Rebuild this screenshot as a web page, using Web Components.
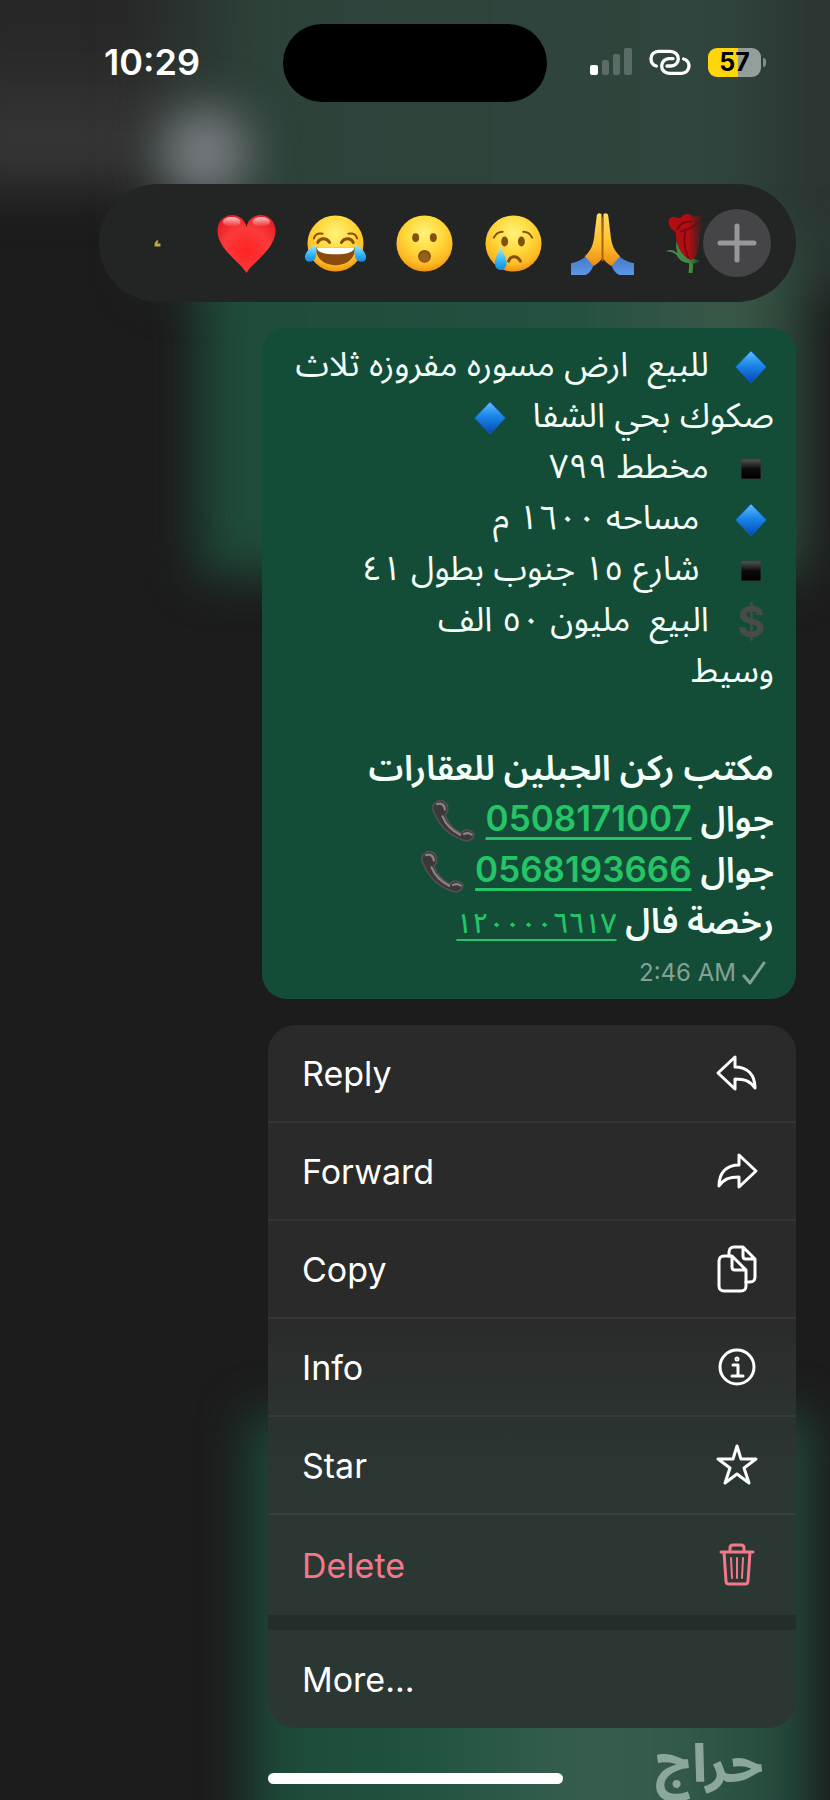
<!DOCTYPE html>
<html lang="en">
<head>
<meta charset="UTF-8">
<meta name="viewport" content="width=device-width, initial-scale=1.0">
<title>Message actions</title>
<style>
    body {
        margin: 0;
        background: #1c1c1c;
        color: #fff;
        font-family: Inter, "Noto Sans Arabic", "DejaVu Sans", sans-serif;
    }
</style>
</head>
<body>
<message-screen>
    <status-bar slot="status" time="10:29" battery="57"></status-bar>
    <reaction-bar></reaction-bar>
    <chat-bubble time="2:46 AM">
        <message-line><emoji-glyph name="diamond"></emoji-glyph>&nbsp; للبيع&nbsp; ارض مسوره مفروزه ثلاث</message-line>
        <message-line>صكوك بحي الشفا&nbsp; <emoji-glyph name="diamond"></emoji-glyph></message-line>
        <message-line><emoji-glyph name="square"></emoji-glyph>&nbsp; مخطط ٧٩٩</message-line>
        <message-line><emoji-glyph name="diamond"></emoji-glyph>&nbsp;&nbsp; مساحه ١٦٠٠ م</message-line>
        <message-line><emoji-glyph name="square"></emoji-glyph>&nbsp;&nbsp; شارع ١٥ جنوب بطول ٤١</message-line>
        <message-line><emoji-glyph name="dollar"></emoji-glyph>&nbsp; البيع&nbsp; مليون ٥٠ الف</message-line>
        <message-line>وسيط</message-line>
        <message-line blank></message-line>
        <message-line strong>مكتب ركن الجبلين للعقارات</message-line>
        <message-line strong>جوال <message-link href="tel:0508171007">0508171007</message-link> <emoji-glyph name="phone"></emoji-glyph></message-line>
        <message-line strong>جوال <message-link href="tel:0568193666">0568193666</message-link><emoji-glyph name="phone"></emoji-glyph></message-line>
        <message-line strong>رخصة فال <message-link href="tel:1200006617" thin>١٢٠٠٠٠٦٦١٧</message-link></message-line>
    </chat-bubble>
    <action-menu>
        <action-item icon="reply">Reply</action-item>
        <action-item icon="forward">Forward</action-item>
        <action-item icon="copy">Copy</action-item>
        <action-item icon="info">Info</action-item>
        <action-item icon="star">Star</action-item>
        <action-item icon="trash" danger>Delete</action-item>
        <action-item separate>More...</action-item>
    </action-menu>
    <site-mark slot="mark">حراج</site-mark>
</message-screen>

<script>
const FACE = `
    <defs>
        <radialGradient id="face" cx="50%" cy="32%" r="68%">
            <stop offset="0" stop-color="#fff27a"/>
            <stop offset=".5" stop-color="#ffd83a"/>
            <stop offset=".82" stop-color="#fdb924"/>
            <stop offset="1" stop-color="#ee9412"/>
        </radialGradient>
        <linearGradient id="tear" x1="0" y1="0" x2="0" y2="1">
            <stop offset="0" stop-color="#a5e9ff"/>
            <stop offset=".6" stop-color="#31b4f5"/>
            <stop offset="1" stop-color="#1688e0"/>
        </linearGradient>
    </defs>
    <circle cx="30" cy="30" r="28.5" fill="url(#face)"/>`;

const EMOJI = {
    thumb: `<path d="M27 33h6v-3h-3l1-3h-2l-2 3z" fill="#c9a636"/>`,
    heart: `
        <defs>
            <radialGradient id="heart" cx="50%" cy="62%" r="65%">
                <stop offset="0" stop-color="#ff2222"/>
                <stop offset=".6" stop-color="#fb3a3a"/>
                <stop offset="1" stop-color="#e81e28"/>
            </radialGradient>
            <linearGradient id="shine" x1="0" y1="0" x2="0" y2="1">
                <stop offset="0" stop-color="#fff" stop-opacity=".75"/>
                <stop offset="1" stop-color="#fff" stop-opacity="0"/>
            </linearGradient>
        </defs>
        <path d="M30 60C25 50 .5 36 .5 17 .5 8 7 1 15.500 1 22 1 28 5 30 13 32 5 38 1 44.500 1 53 1 59.500 8 59.500 17 59.500 36 35 50 30 60z" fill="url(#heart)"/>
        <ellipse cx="15" cy="8" rx="9" ry="5" fill="url(#shine)"/>
        <ellipse cx="45" cy="8" rx="9" ry="5" fill="url(#shine)"/>`,
    joy: `${FACE}
        <path d="M12 29c2-5 9-5 12 0M36 29c3-5 10-5 12 0" fill="none" stroke="#8a4d08" stroke-width="3" stroke-linecap="round"/>
        <path d="M8 25c1-4 4-6 9-5M52 25c-1-4-4-6-9-5" fill="none" stroke="#8a4d08" stroke-width="2" stroke-linecap="round"/>
        <path d="M10 34h40c0 11-8 18-20 18s-20-7-20-18z" fill="#8b4b0d"/>
        <path d="M11 34h38c0 5-8 7-19 7s-19-2-19-7z" fill="#fff"/>
        <path d="M10 31C4 34-2 40-1 45c1 5 9 5 11-1 1-4 1-9 0-13zM50 31c6 3 12 9 11 14-1 5-9 5-11-1-1-4-1-9 0-13z" fill="url(#tear)"/>`,
    wow: `${FACE}
        <ellipse cx="21" cy="24" rx="3.500" ry="4.500" fill="#81500e"/>
        <ellipse cx="39" cy="24" rx="3.500" ry="4.500" fill="#81500e"/>
        <ellipse cx="30" cy="43" rx="6.500" ry="6.500" fill="#81500e"/>
        <ellipse cx="30" cy="44" rx="5" ry="5" fill="#95601a"/>`,
    cry: `${FACE}
        <ellipse cx="21" cy="28" rx="3.500" ry="5" fill="#81500e"/>
        <ellipse cx="38" cy="28" rx="3.500" ry="5" fill="#81500e"/>
        <path d="M10 24c2-4 5-6 9-6M49 24c-2-4-5-6-9-6" fill="none" stroke="#8a4d08" stroke-width="2" stroke-linecap="round"/>
        <path d="M25 48c2-6 9-6 12 0" fill="none" stroke="#81500e" stroke-width="3" stroke-linecap="round"/>
        <path d="M17 34c3 6 6 11 6 16 0 4-3 7-6 7s-6-3-6-7c0-5 3-10 6-16z" fill="url(#tear)"/>`,
    pray: `
        <defs>
            <linearGradient id="hand" x1="0" y1="0" x2="0" y2="1">
                <stop offset="0" stop-color="#ffdf62"/>
                <stop offset=".6" stop-color="#fdbd2c"/>
                <stop offset="1" stop-color="#e98b13"/>
            </linearGradient>
            <linearGradient id="cuff" x1="0" y1="0" x2="0" y2="1">
                <stop offset="0" stop-color="#3f78cf"/>
                <stop offset="1" stop-color="#5f97e2"/>
            </linearGradient>
        </defs>
        <path d="M-2 50c7-1 12-4 16-8l7 9c-1 5-4 9-8 11H-2zM62 50c-7-1-12-4-16-8l-7 9c1 5 4 9 8 11h15z" fill="url(#cuff)"/>
        <path d="M29 0c-3-2-5 0-5 3l-2 16c-1 13-4 18-10 24l9 10c5-3 6-5 9-8zM31 0c3-2 5 0 5 3l2 16c1 13 4 18 10 24l-9 10c-5-3-6-5-9-8z" fill="url(#hand)"/>
        <path d="M30 3v45" stroke="#a96208" stroke-width="2"/>`,
    rose: `
        <path d="M29 44c1 6 1 10 0 16" fill="none" stroke="#4f9b40" stroke-width="4"/>
        <path d="M29 50C21 50 17 46 15 42 11 38 7 39 4 38c6-3 9 0 12 2-2-5-2-9-1-13 4 4 6 10 13 16 4 3 8 4 11 4-3 3-6 4-10 3z" fill="#3f8b43"/>
        <path d="M14 18C7 15 5 8 8 4c4-3 8 1 11 0 3-5 9-5 13-1 6-3 9-1 8 3 4 3 1 10-1 13l-2 16c0 6-4 10-8 12-8-4-15-13-15-29z" fill="#b30d14"/>
        <path d="M15 16c4-7 8-9 15-8M18 18c8-1 14-5 20-10M27 45c-4-9-6-18-3-28" fill="none" stroke="#7b0810" stroke-width="2"/>`,
    diamond: `
        <defs>
            <linearGradient id="blue" x1="0" y1="0" x2="0" y2="1">
                <stop offset="0" stop-color="#62bdff"/>
                <stop offset=".45" stop-color="#1a86e8"/>
                <stop offset="1" stop-color="#0647b5"/>
            </linearGradient>
        </defs>
        <path d="M30 9l20 21-20 21L10 30z" fill="url(#blue)" stroke="#0d62ca" stroke-width="1" stroke-linejoin="round"/>`,
    square: `
        <defs>
            <linearGradient id="black" x1="0" y1="0" x2="0" y2="1">
                <stop offset="0" stop-color="#555"/>
                <stop offset=".5" stop-color="#0b0b0b"/>
                <stop offset="1" stop-color="#000"/>
            </linearGradient>
        </defs>
        <rect x="17" y="17" width="26" height="26" rx="2" fill="url(#black)" stroke="#3b3b3b" stroke-width="1"/>`,
    phone: `
        <path d="M7 5C2 8 1 14 4 19c7 17 20 30 38 36 6 2 12 0 14-6 1-4-3-6-8-7-4-1-7 1-9 4-10-5-17-13-21-24 3-2 4-5 4-9-1-8-9-12-15-8z" fill="#3a3839" stroke="#555052" stroke-width="2"/>
        <path d="M8 8c5-2 10 1 10 7M15 24c5 12 13 19 23 24M43 47c4-2 8-1 10 1" fill="none" stroke="#8a8285" stroke-width="3" stroke-linecap="round"/>`
};

const ICONS = {
    reply: `<path d="M18 6v10c12 0 20 7 20 21-5-7-10-9-20-9v10L1 22z"/>`,
    forward: `<path d="M22 6v10C10 16 2 23 2 37c5-7 10-9 20-9v10l17-16z"/>`,
    copy: `
        <path d="M12 9V5c0-3 2-5 5-5h9l12 12v18c0 3-2 5-5 5h-4M26 0v9c0 2 1 3 3 3h9"/>
        <path d="M15 9H7c-3 0-5 2-5 5v25c0 3 2 5 5 5h17c3 0 5-2 5-5V23zM15 9v11c0 2 1 3 3 3h11"/>`,
    info: `
        <circle cx="20" cy="22" r="17"/>
        <circle cx="20" cy="14" r="1" stroke-width="3"/>
        <path d="M16 20h5v11M15 31h11"/>`,
    star: `<path d="M20 3l4 13h15L27 25l5 15-12-9-12 9 5-15L1 16h15z"/>`,
    trash: `
        <path d="M4 9h32M13 9V5c0-2 1-3 3-3h8c2 0 3 1 3 3v4M7 9l2 29c0 2 1 3 3 3h16c2 0 3-1 3-3l2-29"/>
        <path d="M14 15l1 20M20 15v20M26 15l-1 20" stroke-width="2"/>`
};

class MessageScreen extends HTMLElement {
    connectedCallback() {
        this.attachShadow({ mode: 'open' });
        this.shadowRoot.innerHTML = `
            <style>
                :host {
                    display: block;
                    position: relative;
                    isolation: isolate;
                    overflow: hidden;
                    min-height: 100vh;
                }
                .backdrop {
                    position: absolute;
                    inset: 0;
                    z-index: -1;
                    overflow: hidden;
                }
                .glow {
                    position: absolute;
                    filter: blur(24px);
                }
                .header {
                    inset: -60px -60px auto -60px;
                    height: 250px;
                    background: linear-gradient(#272727 40%, #373737 85%, #303030);
                }
                .previous {
                    left: 15%;
                    right: -60px;
                    top: -60px;
                    height: 350px;
                    background: linear-gradient(90deg, transparent, #2d433a 18%, #30453d 78%, #2a3532 90%);
                }
                .behind {
                    left: 24%;
                    right: 22px;
                    top: 240px;
                    height: 335px;
                    background: linear-gradient(90deg, #1f4b3a, #235040 60%, #3b5848 88%, #2a4437);
                }
                .avatar {
                    left: 162px;
                    top: 108px;
                    width: 86px;
                    height: 90px;
                    border-radius: 50%;
                    background: #7b7e83;
                }
                .next {
                    left: 30%;
                    right: 20px;
                    top: 1416px;
                    bottom: -60px;
                    background: linear-gradient(90deg, #1d4838, #205340 30%, #365d4d 58%, #335a4a 76%, #21483a);
                }
                main {
                    display: flex;
                    flex-direction: column;
                    align-items: flex-end;
                    padding: 82px 34px 0;
                    gap: 26px;
                }
                footer {
                    display: grid;
                    grid-template-columns: 1fr 295px 1fr;
                    align-items: center;
                    height: 72px;
                }
                .home {
                    grid-column: 2;
                    height: 11px;
                    margin-top: 28px;
                    border-radius: 6px;
                    background: #fff;
                }
            </style>
            <div class="backdrop">
                <div class="glow header"></div>
                <div class="glow previous"></div>
                <div class="glow behind"></div>
                <div class="glow avatar"></div>
                <div class="glow next"></div>
            </div>
            <slot name="status"></slot>
            <main><slot></slot></main>
            <footer>
                <div class="home"></div>
                <slot name="mark"></slot>
            </footer>
        `;
    }
}

class StatusBar extends HTMLElement {
    connectedCallback() {
        this.attachShadow({ mode: 'open' });
        const battery = this.getAttribute('battery') || '100';

        this.shadowRoot.innerHTML = `
            <style>
                :host {
                    display: grid;
                    grid-template-columns: 1fr 264px 1fr;
                    align-items: center;
                    height: 78px;
                    padding-top: 24px;
                }
                time {
                    padding: 0 0 2px 104px;
                    font-size: 36px;
                    font-weight: 600;
                    line-height: 40px;
                }
                .island {
                    height: 78px;
                    border-radius: 39px;
                    background: #000;
                }
                .status {
                    display: flex;
                    align-items: center;
                    justify-content: flex-end;
                    gap: 17px;
                    padding: 0 64px 2px 0;
                }
                svg {
                    display: block;
                }
                .battery {
                    display: flex;
                    align-items: center;
                    gap: 2px;
                }
                .level {
                    width: 53px;
                    border-radius: 9px;
                    background: linear-gradient(90deg, #ffd60a ${battery}%, #949e9a ${battery}%);
                    color: #000;
                    font-size: 25px;
                    font-weight: 700;
                    line-height: 29px;
                    text-align: center;
                }
                .nub {
                    width: 3px;
                    height: 9px;
                    border-radius: 0 4px 4px 0;
                    background: #7f8b87;
                }
            </style>
            <time>${this.getAttribute('time')}</time>
            <div class="island"></div>
            <div class="status">
                <svg width="42" height="28" viewBox="0 0 42 28" fill="#5b6b65">
                    <rect x="0" y="17" width="8" height="10" rx="2" fill="#fff"/>
                    <rect x="12" y="12" width="7" height="15" rx="2"/>
                    <rect x="23" y="6" width="7" height="21" rx="2"/>
                    <rect x="34" y="0" width="8" height="27" rx="2"/>
                </svg>
                <svg width="42" height="26" viewBox="0 0 126 78" fill="none" stroke="#fff" stroke-width="10" stroke-linecap="round">
                    <path d="M22 51C12 48 6 39 6 29 6 16 16 7 28 7h36c13 0 24 10 24 22S78 51 66 51H54"/>
                    <path d="M72 29H60c-12 0-22 9-22 22s10 22 23 22h37c13 0 22-10 22-22 0-10-6-18-16-21"/>
                </svg>
                <div class="battery">
                    <div class="level">${battery}</div>
                    <div class="nub"></div>
                </div>
            </div>
        `;
    }
}

class EmojiGlyph extends HTMLElement {
    connectedCallback() {
        this.attachShadow({ mode: 'open' });
        const name = this.getAttribute('name');
        const glyph = name === 'dollar'
            ? '<b>$</b>'
            : `<svg viewBox="0 0 60 60" aria-hidden="true">${EMOJI[name]}</svg>`;

        this.shadowRoot.innerHTML = `
            <style>
                :host {
                    display: inline-flex;
                    align-items: center;
                    justify-content: center;
                    width: 46px;
                    height: 46px;
                    vertical-align: middle;
                }
                svg {
                    flex: none;
                    width: 46px;
                    height: 46px;
                    overflow: visible;
                }
                :host([large]),
                :host([large]) svg {
                    width: 59px;
                    height: 59px;
                }
                b {
                    color: #484c49;
                    font: 700 42px/46px Inter, sans-serif;
                }
            </style>
            ${glyph}
        `;
    }
}

class ReactionBar extends HTMLElement {
    connectedCallback() {
        this.attachShadow({ mode: 'open' });
        const names = ['thumb', 'heart', 'joy', 'wow', 'cry', 'pray', 'rose'];

        this.shadowRoot.innerHTML = `
            <style>
                :host {
                    display: flex;
                    position: relative;
                    align-items: center;
                    gap: 30px;
                    box-sizing: border-box;
                    width: 697px;
                    max-width: 100%;
                    height: 118px;
                    padding-left: 29px;
                    border-radius: 59px;
                    background: #232524;
                }
                button {
                    flex: none;
                    padding: 0;
                    border: 0;
                    background: none;
                    line-height: 0;
                }
                button:nth-of-type(7) {
                    -webkit-mask: linear-gradient(90deg, #000 45%, transparent 70%);
                    mask: linear-gradient(90deg, #000 45%, transparent 70%);
                }
                .more {
                    position: absolute;
                    right: 25px;
                    width: 68px;
                    height: 68px;
                    border-radius: 50%;
                    background: #454547;
                }
            </style>
            ${names.map(name => `<button aria-label="${name}"><emoji-glyph large name="${name}"></emoji-glyph></button>`).join('')}
            <button class="more" aria-label="More reactions">
                <svg width="68" height="68" viewBox="0 0 68 68" stroke="#98989a" stroke-width="5" stroke-linecap="round">
                    <path d="M34 17v34M17 34h34"/>
                </svg>
            </button>
        `;
    }
}

class ChatBubble extends HTMLElement {
    connectedCallback() {
        this.attachShadow({ mode: 'open' });
        this.shadowRoot.innerHTML = `
            <style>
                :host {
                    display: block;
                    box-sizing: border-box;
                    width: 534px;
                    max-width: 100%;
                    padding: 10px 22px 8px;
                    border-radius: 25px;
                    background: #144d37;
                }
                .meta {
                    display: flex;
                    align-items: center;
                    justify-content: flex-end;
                    gap: 6px;
                    height: 37px;
                    padding: 8px 8px 0 0;
                    color: #84a294;
                    font-size: 24px;
                }
            </style>
            <slot></slot>
            <div class="meta">
                <time>${this.getAttribute('time')}</time>
                <svg width="24" height="24" viewBox="0 0 24 24" fill="none" stroke="currentColor" stroke-width="3" stroke-linecap="round" stroke-linejoin="round">
                    <path d="M2 15l6 7L22 2"/>
                </svg>
            </div>
        `;
    }
}

class MessageLine extends HTMLElement {
    connectedCallback() {
        this.attachShadow({ mode: 'open' });
        this.shadowRoot.innerHTML = `
            <style>
                :host {
                    display: block;
                    height: 51px;
                    direction: rtl;
                    color: #f4fff9;
                    font-size: 34px;
                    line-height: 51px;
                    white-space: nowrap;
                }
                :host([strong]) {
                    font-size: 35px;
                    font-weight: 600;
                }
                :host([blank]) {
                    height: 47px;
                }
            </style>
            <slot></slot>
        `;
    }
}

class MessageLink extends HTMLElement {
    connectedCallback() {
        this.attachShadow({ mode: 'open' });
        this.shadowRoot.innerHTML = `
            <style>
                :host {
                    display: inline;
                }
                a {
                    color: #25c466;
                    font-size: 35px;
                    text-decoration: underline 3px;
                    text-decoration-skip-ink: none;
                    text-underline-offset: 6px;
                }
                :host([thin]) a {
                    font-size: 28px;
                    font-weight: 500;
                    text-decoration-thickness: 2px;
                }
            </style>
            <a href="${this.getAttribute('href')}"><slot></slot></a>
        `;
    }
}

class ActionMenu extends HTMLElement {
    connectedCallback() {
        this.attachShadow({ mode: 'open' });
        this.shadowRoot.innerHTML = `
            <style>
                :host {
                    display: block;
                    width: 528px;
                    max-width: 100%;
                    overflow: hidden;
                    border-radius: 27px;
                    background: linear-gradient(#2a2a2a 40%, #2b302e 50%, #2b3733 66%, #2c3733);
                }
            </style>
            <slot></slot>
        `;
    }
}

class ActionItem extends HTMLElement {
    connectedCallback() {
        this.attachShadow({ mode: 'open' });
        const icon = ICONS[this.getAttribute('icon')];

        this.shadowRoot.innerHTML = `
            <style>
                :host {
                    display: block;
                    box-sizing: border-box;
                    height: 98px;
                    border-bottom: 2px solid rgba(255, 255, 255, 0.05);
                }
                :host([danger]) {
                    height: 100px;
                    border-bottom: 0;
                    color: #f4788a;
                }
                :host([separate]) {
                    height: 113px;
                    border-top: 15px solid #232d29;
                    border-bottom: 0;
                }
                button {
                    display: flex;
                    align-items: center;
                    justify-content: space-between;
                    width: 100%;
                    height: 100%;
                    padding: 0 39px 0 34px;
                    border: 0;
                    background: none;
                    color: inherit;
                    font: inherit;
                    font-size: 34px;
                }
                svg {
                    overflow: visible;
                }
            </style>
            <button>
                <slot></slot>
                ${icon ? `<svg width="40" height="44" viewBox="0 0 40 44" fill="none" stroke="currentColor" stroke-width="3" stroke-linecap="round" stroke-linejoin="round">${icon}</svg>` : ''}
            </button>
        `;
    }
}

class SiteMark extends HTMLElement {
    connectedCallback() {
        this.attachShadow({ mode: 'open' });
        this.shadowRoot.innerHTML = `
            <style>
                :host {
                    display: block;
                    padding-left: 26px;
                    color: #8ba69b;
                    font-size: 52px;
                    font-weight: 800;
                    line-height: 52px;
                    text-align: center;
                }
            </style>
            <slot></slot>
        `;
    }
}

customElements.define('message-screen', MessageScreen);
customElements.define('status-bar', StatusBar);
customElements.define('emoji-glyph', EmojiGlyph);
customElements.define('reaction-bar', ReactionBar);
customElements.define('chat-bubble', ChatBubble);
customElements.define('message-line', MessageLine);
customElements.define('message-link', MessageLink);
customElements.define('action-menu', ActionMenu);
customElements.define('action-item', ActionItem);
customElements.define('site-mark', SiteMark);
</script>
</body>
</html>
